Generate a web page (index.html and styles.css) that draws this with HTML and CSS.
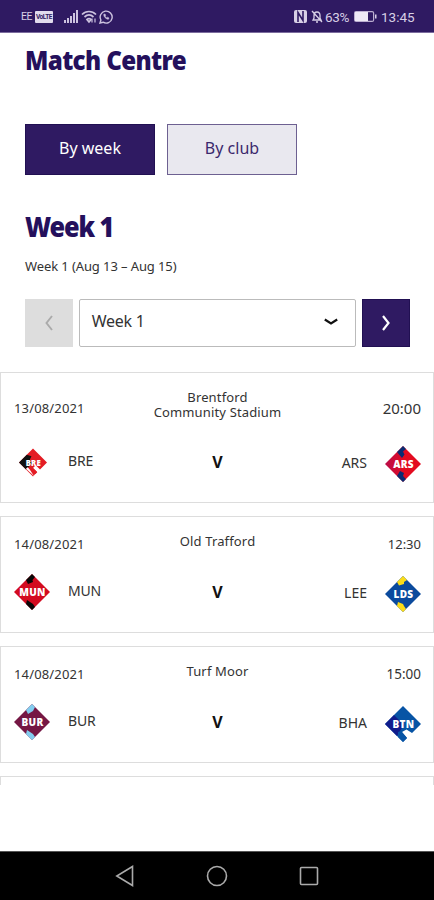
FILE: index.html
```html
<!DOCTYPE html>
<html lang="en">
<head>
<meta charset="utf-8">
<title>Match Centre</title>
<link rel="stylesheet" href="styles.css">
</head>
<body>
<div class="status">
  <div class="status-left">
    <span class="carrier">EE</span><span class="volte">VoLTE</span>
    <svg class="signal" width="15" height="13" viewBox="0 0 15 13" fill="#cdc3df"><path d="M0 10h2v3H0zM3 8h2v5H3zM6 6h2v7H6zM9 3h2v10H9zM12 0h2v13h-2z"/></svg>
    <svg class="wifi" width="16" height="14" viewBox="0 0 16 14" fill="none" stroke="#cdc3df" stroke-width="1.7"><path d="M1 4.5C5 .5 11 .5 15 4.5M3.5 7c3-2.7 6-2.7 9 0M6 9.5c1.4-1.2 2.6-1.2 4 0L8 12z"/><path d="M11 8.5v4M14 8.5v4" stroke-width="1.2"/></svg>
    <svg width="14" height="14" viewBox="0 0 14 14" fill="none" stroke="#cdc3df" stroke-width="1.4"><path d="M1 13l.9-3A6 6 0 1 1 4 12.2z"/><path d="M4.8 4.2c-.5 2.3 2.3 5.2 4.7 5l.5-1.3-1.5-.7-.7.6C6.900 7.400 6.500 6.900 6.200 6.200l.5-.7-.6-1.500z" fill="#cdc3df" stroke-width=".5"/></svg>
  </div>
  <div class="status-right">
    <svg width="13" height="13" viewBox="0 0 13 13"><rect width="13" height="13" rx="2" fill="#d8d0e6"/><path d="M4 12V2.500l5 8V1" fill="none" stroke="#2f1a62" stroke-width="1.600"/></svg>
    <svg class="bell" width="12" height="13" viewBox="0 0 12 13" fill="none" stroke="#d8d0e6" stroke-width="1.300"><path d="M2 10h8L9 8V5.500C9 3.500 8 2 6 2S3 3.500 3 5.500V8zM5 12h2M1 1l10 11"/></svg>
    <span class="percent">63%</span>
    <svg class="battery" width="23" height="11" viewBox="0 0 23 11"><rect x=".6" y=".6" width="19" height="9.800" rx="1.500" fill="none" stroke="#bbaed0" stroke-width="1.200"/><path d="M1 1h13v9H1z" fill="#eee9f5"/><path d="M21 3.500h1.500v4H21z" fill="#d8d0e6"/></svg>
    <span class="clock">13:45</span>
  </div>
</div>

<main>
  <section class="intro">
    <h1>Match Centre</h1>
    <div class="tabs">
      <button class="tab active">By week</button>
      <button class="tab">By club</button>
    </div>
    <h2>Week 1</h2>
    <p class="range">Week 1 (Aug 13 – Aug 15)</p>
    <div class="picker">
      <button class="step off"><svg width="10" height="16" viewBox="0 0 10 16"><path d="M8 1 2.500 8 8 15" fill="none" stroke="#aaa" stroke-width="1.900"/></svg></button>
      <div class="select"><span>Week 1</span><svg width="14" height="9" viewBox="0 0 14 9"><path d="M.8 1.500 7 5.500 13.200 1.500" fill="none" stroke="#111" stroke-width="2.200"/></svg></div>
      <button class="step"><svg width="10" height="16" viewBox="0 0 10 16"><path d="M2 1 7.500 8 2 15" fill="none" stroke="#fff" stroke-width="2.200"/></svg></button>
    </div>
  </section>

  <section class="matches">
    <article class="card">
      <div class="info"><span class="date">13/08/2021</span><span class="venue">Brentford<br>Community Stadium</span><span class="time wide">20:00</span></div>
      <div class="teams">
        <div class="home"><svg class="crest small" viewBox="0 0 36 36"><path d="M18 0 36 18 27 27 21.500 21.500 18 25 23.500 30.500 18 36 0 18z" fill="#e41c24"/><path d="M10 8 0 18l9 9 8-8-3-5 2-4z" fill="#111"/><path d="M9 26 11 24l11 10-2 2z" fill="#fff"/><path d="m12 24 4-1 7 7-4 5z" fill="#e41c24"/><text x="18.500" y="22">BRE</text></svg><span>BRE</span></div>
        <b>V</b>
        <div class="away"><span>ARS</span><svg class="crest" viewBox="0 0 36 36"><path d="M18 0 36 18 18 36 0 18z" fill="url(#ars)"/><path d="M18 0 21 3 18 5.500 19.500 8.500 17 12 12 6zM12 30l6 6 3-3-3-3 1-3-4-2z" fill="#092c73"/><text x="18.500" y="21.500">ARS</text><defs><linearGradient id="ars"><stop stop-color="#b90c49"/><stop offset=".55" stop-color="#e30b20"/></linearGradient></defs></svg></div>
      </div>
    </article>
    <article class="card">
      <div class="info"><span class="date">14/08/2021</span><span class="venue">Old Trafford</span><span class="time">12:30</span></div>
      <div class="teams">
        <div class="home"><svg class="crest" viewBox="0 0 36 36"><path d="M18 0 36 18 18 36 0 18z" fill="#d30b20"/><path d="M18 0 21 3 18.500 6 19 8 14 10 12 6zM12 30l6 6 3-3-2-3-6-4z" fill="#080808"/><text x="18.500" y="21.500">MUN</text></svg><span>MUN</span></div>
        <b>V</b>
        <div class="away"><span>LEE</span><svg class="crest" viewBox="0 0 36 36"><path d="M18 0 36 18 18 36 0 18z" fill="#0b4a9d"/><path d="M18 0 22 4 19 6 19 8 14 9.500 12 6zM12 30l6 6 3-3-2-3-1-2-5-2z" fill="#fbdc18"/><text x="18.500" y="21.500">LDS</text></svg></div>
      </div>
    </article>
    <article class="card">
      <div class="info"><span class="date">14/08/2021</span><span class="venue">Turf Moor</span><span class="time mid">15:00</span></div>
      <div class="teams">
        <div class="home"><svg class="crest" viewBox="0 0 36 36"><path d="M18 0 36 18 18 36 0 18z" fill="#751744"/><path d="M18 0 21 3 19 7 14 10 12 6zM12 30l6 6 3-3-2-3-6-4z" fill="#83cdef"/><text x="18.500" y="21.500">BUR</text></svg><span>BUR</span></div>
        <b>V</b>
        <div class="away"><span>BHA</span><svg class="crest" viewBox="0 0 36 36"><path d="M18 0 36 18 27 27 21.500 23.500 17 26 22 32 18 36 0 18z" fill="#0754a5"/><path d="M9 9 0 18l12 12 3-5 4-6-5-5z" fill="#101c8c"/><path d="m13 26 3-1 6 7-4 4-5-5z" fill="#0754a5"/><text x="18.500" y="21.500">BTN</text></svg></div>
      </div>
    </article>
    <div class="card next-card"></div>
  </section>
</main>

<nav>
  <svg width="20" height="22" viewBox="0 0 20 22"><path d="M17.500 1.500v19L1.800 11z"/></svg>
  <svg width="22" height="22" viewBox="0 0 22 22"><circle cx="11" cy="11" r="9.500"/></svg>
  <svg width="20" height="20" viewBox="0 0 20 20"><rect x="1.500" y="1.500" width="17" height="17" rx="1"/></svg>
</nav>
</body>
</html>
```
FILE: styles.css
```css
* { box-sizing: border-box; }
body {
  margin: 0;
  height: 900px;
  overflow: hidden;
  display: flex;
  flex-direction: column;
  background: #fff;
  color: #333;
  font-family: "Noto Sans", sans-serif;
}
svg { display: block; flex: none; }
button { font: inherit; padding: 0; margin: 0; }

.status {
  height: 33px;
  flex: none;
  padding: 1px 19px 0 21px;
  display: flex;
  justify-content: space-between;
  align-items: center;
  background: #2f1a62;
  border-bottom: 1px solid #7c6c9e;
  color: #d8d0e6;
  font-family: Roboto, sans-serif;
}
.status-left, .status-right { display: flex; align-items: center; }
.carrier { font-size: 10.5px; width: 14px; letter-spacing: -0.5px; }
.volte {
  width: 18px;
  height: 12px;
  border-radius: 1px;
  background: #e2dbed;
  color: #2f1a62;
  font-size: 6.5px;
  font-weight: 700;
  line-height: 12px;
  text-align: center;
  letter-spacing: -0.4px;
}
.signal { margin-left: 11px; }
.wifi { margin: 0 2px; }
.bell { margin: 0 2px 0 4px; }
.percent { width: 28px; font-size: 13.5px; letter-spacing: -0.3px; }
.battery { margin: 0 4px 0 1px; }
.clock { width: 34px; font-size: 13.5px; white-space: nowrap; }

main { flex: 1; min-height: 0; }
.intro { padding: 9px 24px 0 25px; }
h1, h2 {
  margin: 0;
  color: #24105c;
  font-weight: 900;
  white-space: nowrap;
  transform-origin: left;
}
h1 { font-size: 26px; line-height: 36px; letter-spacing: -0.7px; transform: scaleX(0.93); }
.tabs { display: flex; gap: 12px; margin-top: 46px; }
.tab {
  width: 130px;
  height: 51px;
  padding-bottom: 3px;
  border: 1px solid #6d6091;
  background: #e9e8ef;
  color: #3b286d;
  font-size: 16px;
}
.tab.active { background: #2f1a62; border-color: #211052; color: #fff; }
h2 { margin-top: 32px; font-size: 29px; line-height: 38px; letter-spacing: -1.3px; transform: scaleX(0.87); }
.range { margin: 11px 0 0; font-size: 13px; line-height: 20px; letter-spacing: -0.1px; }
.picker { display: flex; margin-top: 23px; height: 48px; }
.step {
  width: 48px;
  display: grid;
  place-items: center;
  background: #2f1a62;
  border: 1px solid #211052;
}
.step.off { background: #ddd; border-color: #ddd; }
.select {
  width: 278px;
  margin: 0 6px;
  padding: 0 17px 0 12px;
  display: flex;
  align-items: center;
  justify-content: space-between;
  border: 1px solid #bbb;
  border-radius: 2px;
  font-size: 16px;
}
.select svg { margin-bottom: 2px; }
.select span { padding-bottom: 4px; letter-spacing: -0.3px; }

.matches { margin-top: 25px; height: 413px; overflow: hidden; }
.card { border: 1px solid #ddd; margin-bottom: 13px; height: 117px; padding: 17px 12px 0 13px; }
.card:first-child { height: 131px; }
.info { display: grid; grid-template-columns: 80px 1fr 80px; align-items: center; font-size: 13px; line-height: 14.5px; }
.date, .time { padding-top: 6px; line-height: 8px; }
.date { white-space: nowrap; letter-spacing: 0.15px; }
.venue { text-align: center; letter-spacing: 0.15px; }
.time { text-align: right; }
.time.mid { font-size: 13.5px; }
.time.wide { font-size: 15px; }
.teams { margin-top: 24px; height: 38px; display: grid; grid-template-columns: 1fr 20px 1fr; align-items: center; font-size: 14px; }
.teams b { text-align: center; font-size: 16px; color: #111; }
.home, .away { display: flex; align-items: center; height: 36px; gap: 18px; }
.home span, .away span { padding-bottom: 3px; }
.home span { letter-spacing: -0.2px; }
.away { justify-content: flex-end; padding-top: 4px; }
.crest { width: 36px; height: 36px; }
.crest.small { width: 28px; height: 29px; margin: 0 3px 0 5px; }
.crest text {
  font: 900 10px "Noto Sans", sans-serif;
  fill: #fff;
  text-anchor: middle;
  letter-spacing: 0.3px;
}
.next-card { margin-bottom: 0; border-bottom: 0; }

nav {
  flex: none;
  height: 49px;
  padding: 0 115px;
  display: flex;
  justify-content: space-between;
  align-items: center;
  background: #000;
  border-top: 1px solid #555;
}
nav svg { fill: none; stroke: #aaa; stroke-width: 1.6; }
```
